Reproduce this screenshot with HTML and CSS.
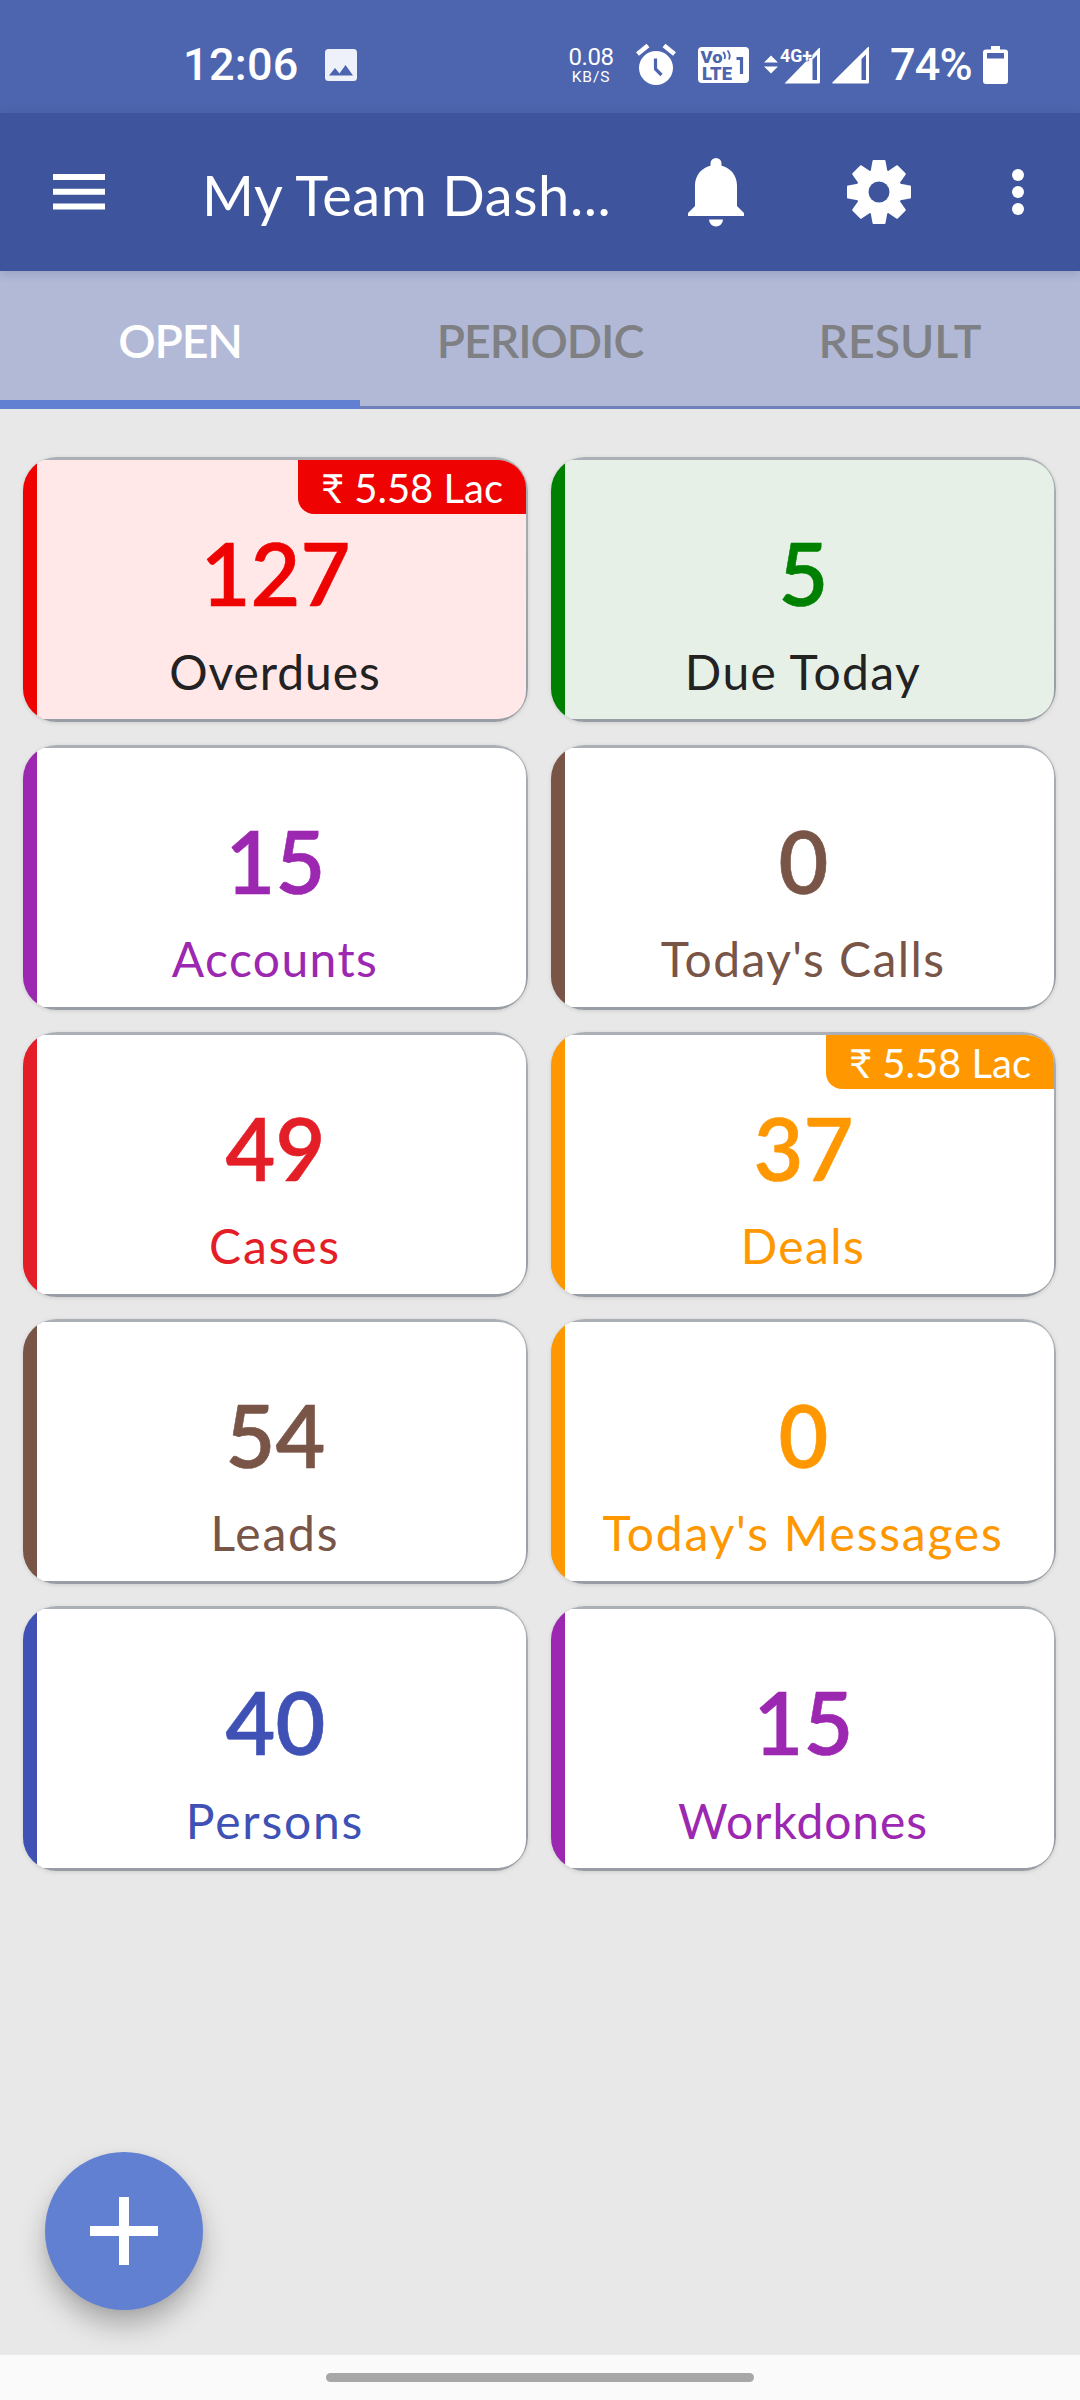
FILE: index.html
```html
<!DOCTYPE html>
<html lang="en">
<head>
<meta charset="utf-8">
<title>My Team Dashboard</title>
<link rel="stylesheet" href="styles.css">
</head>
<body>
<div class="app">
  <div class="status">
    <span class="clock">12:06</span>
    <svg class="photo" width="32" height="32" viewBox="0 0 32 32"><rect width="32" height="32" rx="3.5" fill="#eef0fa"/><path d="M4 26.500l6-7.500 4.500 5.500 6-8.500 7.500 10.500z" fill="#4d65ae"/></svg>
    <div class="speed"><span class="rate">0.08</span><span class="unit">KB/S</span></div>
    <svg class="alarm" width="40" height="42" viewBox="0 0 40 42"><circle cx="20" cy="24" r="17" fill="#fff"/><path d="M1.500 10L12 1.500M38.500 10L28 1.500" stroke="#fff" stroke-width="4.500"/><path d="M19.500 14.500v10.500l6 6" fill="none" stroke="#4d65ae" stroke-width="3.200"/></svg>
    <svg class="volte" width="51" height="36" viewBox="0 0 51 36"><rect width="51" height="36" rx="4" fill="#fff"/><g fill="#4d65ae" font-family="Roboto, sans-serif" font-weight="900"><text x="2.500" y="16" font-size="17" textLength="22" lengthAdjust="spacingAndGlyphs">Vo</text><text x="4" y="32.500" font-size="17.500" textLength="30" lengthAdjust="spacingAndGlyphs">LTE</text></g><path d="M25 5q3 3 1.500 7M29.500 3.500q3.500 4 1.500 9" fill="none" stroke="#4d65ae" stroke-width="1.800"/><path d="M38.500 11.500h5v15.500" fill="none" stroke="#4d65ae" stroke-width="3.200"/></svg>
    <svg class="signal-data" width="56" height="38" viewBox="0 0 56 38"><path d="M0 16.500L7 9.500l7 7zM0 20.500l7 7 7-7z" fill="#fff"/><path d="M20.500 37.500L54.500 2.500q1.500-1.500 1.500.500V36q0 1.500-1.500 1.500z" fill="#fff"/><path d="M48.500 13.500L53 9v25h-4.500z" fill="#4d65ae"/><text x="16" y="15.500" font-family="Roboto, sans-serif" font-weight="700" font-size="18.500" fill="#fff" stroke="#4d65ae" stroke-width="1.500" paint-order="stroke" textLength="32" lengthAdjust="spacingAndGlyphs">4G+</text></svg>
    <svg class="signal" width="38" height="38" viewBox="0 0 38 38"><path d="M1 37.500Q-.500 37.500.800 36L35.500 1.500q1.500-1.500 1.500.500V36q0 1.500-1.500 1.500z" fill="#fff"/><path d="M29.500 13L34 8.500V34h-4.500z" fill="#4d65ae"/></svg>
    <span class="charge">74%</span>
    <svg class="battery" width="25" height="38" viewBox="0 0 25 38"><path d="M8 0h9v3.500h5q3 0 3 3V35q0 3-3 3H3q-3 0-3-3V6.500q0-3 3-3h5z" fill="#fff"/><path d="M4 7h17v5.500H4z" fill="#4d65ae"/></svg>
  </div>

  <header class="bar">
    <svg class="menu" width="52" height="36" viewBox="0 0 52 36"><path d="M0 0h52v6H0zM0 14.700h52v6H0zM0 29.400h52v6H0z" fill="#fff"/></svg>
    <h1 class="title">My Team Dash...</h1>
    <svg class="bell" width="56" height="69" viewBox="0 0 56 69"><path d="M28 0a5.500 5.500 0 0 1 5.500 5.500v2.300C43 10 49 18 49 27.500V48l7 7v3H0v-3l7-7V27.500C7 18 13 10 22.500 7.800V5.500A5.500 5.500 0 0 1 28 0zM21 61.500h14a7 7 0 0 1-14 0z" fill="#fff"/></svg>
    <svg class="gear" width="64" height="64" viewBox="-32 -32 64 64"><defs><path id="tooth" d="M-8.500-20l2-11q.2-1 1-1H5.500q.8 0 1 1L8.500-20z"/></defs><g fill="#fff"><circle r="23"/><use href="#tooth"/><use href="#tooth" transform="rotate(45)"/><use href="#tooth" transform="rotate(90)"/><use href="#tooth" transform="rotate(135)"/><use href="#tooth" transform="rotate(180)"/><use href="#tooth" transform="rotate(225)"/><use href="#tooth" transform="rotate(270)"/><use href="#tooth" transform="rotate(315)"/></g><circle r="10.500" fill="#3e559e"/></svg>
    <svg class="more" width="12" height="46" viewBox="0 0 12 46"><g fill="#fff"><circle cx="6" cy="6" r="6"/><circle cx="6" cy="23" r="6"/><circle cx="6" cy="40" r="6"/></g></svg>
  </header>

  <nav class="tabs">
    <div class="tab active">OPEN</div>
    <div class="tab periodic">PERIODIC</div>
    <div class="tab">RESULT</div>
  </nav>

  <main class="grid">
    <section class="card overdue"><div class="body"><div class="badge">₹ 5.58 Lac</div><div class="num">127</div><div class="label tight">Overdues</div></div></section>
    <section class="card today"><div class="body"><div class="num">5</div><div class="label">Due Today</div></div></section>
    <section class="card purple"><div class="body"><div class="num">15</div><div class="label">Accounts</div></div></section>
    <section class="card brown"><div class="body"><div class="num">0</div><div class="label">Today's Calls</div></div></section>
    <section class="card red"><div class="body"><div class="num">49</div><div class="label wide">Cases</div></div></section>
    <section class="card orange"><div class="body"><div class="badge">₹ 5.58 Lac</div><div class="num">37</div><div class="label">Deals</div></div></section>
    <section class="card brown"><div class="body"><div class="num">54</div><div class="label wide">Leads</div></div></section>
    <section class="card orange"><div class="body"><div class="num">0</div><div class="label wide">Today's Messages</div></div></section>
    <section class="card blue"><div class="body"><div class="num">40</div><div class="label wide">Persons</div></div></section>
    <section class="card purple"><div class="body"><div class="num">15</div><div class="label tight">Workdones</div></div></section>
  </main>

  <button class="fab" aria-label="Add"><svg width="68" height="68" viewBox="0 0 68 68"><path d="M29 0h10v29h29v10H39v29H29V39H0V29h29z" fill="#fff"/></svg></button>
  <footer class="gesture"><div class="pill"></div></footer>
</div>
</body>
</html>
```
FILE: styles.css
```css
* { box-sizing: border-box; }
body { margin: 0; }
svg { display: block; flex: none; }

.app {
  position: relative;
  display: flex;
  flex-direction: column;
  width: 1080px;
  height: 2400px;
  background: #e8e8e8;
  font-family: Lato, "Noto Sans", sans-serif;
  overflow: hidden;
}

/* System status bar */
.status {
  display: flex;
  align-items: center;
  height: 113px;
  padding: 17px 71px 0 183px;
  background: #4d65ae;
  color: #fff;
  font-family: Roboto, sans-serif;
}
.clock, .charge {
  font-size: 45px;
  font-weight: 500;
  line-height: 50px;
  white-space: nowrap;
}
.clock { width: 142px; letter-spacing: 0.3px; }
.charge { width: 93px; margin-left: 20px; letter-spacing: -0.8px; }
.speed {
  display: flex;
  flex-direction: column;
  align-items: center;
  width: 46px;
  margin-left: 211px;
}
.rate { font-size: 24px; line-height: 24px; letter-spacing: -0.5px; }
.unit { font-size: 15.5px; line-height: 16px; letter-spacing: 0.9px; }
.alarm { margin-left: 22px; }
.volte { margin-left: 22px; }
.signal-data { margin-left: 15px; }
.signal { margin-left: 12px; }

/* App bar */
.bar {
  position: relative;
  z-index: 1;
  display: flex;
  align-items: center;
  height: 158px;
  padding: 0 56px 0 53px;
  background: #3e559e;
  box-shadow: 0 2px 10px rgba(40, 50, 90, 0.2);
}
.title {
  width: 420px;
  margin: 6px 0 0 97px;
  color: #fff;
  font-size: 56px;
  font-weight: 400;
  line-height: 68px;
  letter-spacing: 0.6px;
  white-space: nowrap;
}
.bell { margin-left: 66px; }
.gear { margin-left: 103px; }
.more { margin-left: 101px; }

/* Tabs */
.tabs {
  display: flex;
  height: 138px;
  background: #b1b9d7;
}
.tab {
  display: flex;
  flex: 1;
  align-items: center;
  justify-content: center;
  padding-top: 2px;
  border-bottom: 3px solid #7080bb;
  color: #7f8083;
  font-size: 46.5px;
  font-weight: 600;
  letter-spacing: -0.1px;
}
.tab.active {
  padding-top: 8px;
  border-bottom: 9px solid #6280d1;
  color: #fff;
  letter-spacing: -1.2px;
}
.tab.periodic { letter-spacing: -1.1px; }

/* Cards */
.grid {
  display: grid;
  flex: 1;
  grid-template-columns: 505px 505px;
  grid-auto-rows: 265px;
  gap: 22.2px 23px;
  align-content: start;
  padding: 48.4px 0 0 23px;
}
.card {
  --tone: #9c27b0;
  --fill: #fff;
  display: flex;
  border-radius: 34px;
  background: linear-gradient(#aab0b6, #989ca4);
  box-shadow: 0 1px 4px rgba(0, 0, 0, 0.12);
  overflow: hidden;
}
.card::before {
  content: "";
  width: 14px;
  background: var(--tone);
}
.body {
  position: relative;
  flex: 1;
  margin: 3px 2px 3px 0;
  padding: 63px 14px 0 2px;
  border-radius: 0 28px 28px 0;
  background: var(--fill);
  color: var(--tone);
  text-align: center;
  overflow: hidden;
}
.num {
  font-size: 86px;
  font-weight: 600;
  line-height: 100px;
  -webkit-text-stroke: 0.6px currentColor;
}
.label {
  margin-top: 18.500px;
  padding-right: 1px;
  font-size: 48px;
  line-height: 60px;
  letter-spacing: 1.4px;
  white-space: nowrap;
}
.label.tight { letter-spacing: 0.9px; }
.label.wide { letter-spacing: 1.8px; }
.badge {
  position: absolute;
  top: 0;
  right: 0;
  width: 228px;
  height: 54px;
  border-bottom-left-radius: 16px;
  background: var(--tone);
  color: #fff;
  font-size: 40px;
  line-height: 57px;
}
.overdue { --tone: #ee0202; --fill: #ffe8e7; }
.today { --tone: #008000; --fill: #e6f0e6; }
.overdue .label, .today .label { color: #222; }
.brown { --tone: #795548; }
.red { --tone: #e41e26; }
.orange { --tone: #ff9800; }
.blue { --tone: #3f51b5; }

.fab {
  position: absolute;
  left: 45px;
  top: 2152px;
  display: flex;
  align-items: center;
  justify-content: center;
  width: 158px;
  height: 158px;
  padding: 0;
  border: 0;
  border-radius: 50%;
  background: #6280d1;
  box-shadow: 0 16px 26px rgba(0, 0, 0, 0.25), 0 2px 8px rgba(0, 0, 0, 0.06);
}

/* System gesture area */
.gesture {
  position: relative;
  display: flex;
  justify-content: center;
  height: 45px;
  padding-top: 18px;
  background: #fafafa;
}
.pill {
  width: 428px;
  height: 9px;
  border-radius: 5px;
  background: #a7a7a7;
}
```
